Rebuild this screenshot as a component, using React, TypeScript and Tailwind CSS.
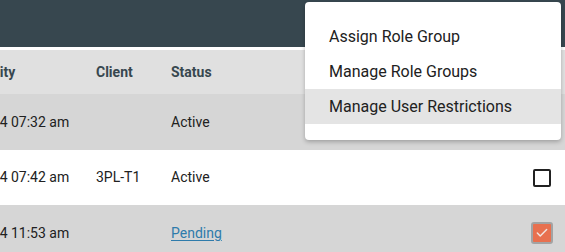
import { Check } from 'lucide-react';

interface UserRow {
  id: string;
  lastActivity: string;
  client: string;
  status: 'Active' | 'Pending';
  checked: boolean;
  bg: string;
  h: string;
}

const rows: UserRow[] = [
  { id: '1', lastActivity: '25/07/2024 07:32 am', client: '', status: 'Active', checked: false, bg: 'bg-[#d6d6d6]', h: 'h-[56px]' },
  { id: '2', lastActivity: '25/07/2024 07:42 am', client: '3PL-T1', status: 'Active', checked: false, bg: 'bg-white', h: 'h-[55px]' },
  { id: '3', lastActivity: '25/07/2024 11:53 am', client: '', status: 'Pending', checked: true, bg: 'bg-[#d6d6d6]', h: 'h-[56px]' },
];

const menuItems = ['Assign Role Group', 'Manage Role Groups', 'Manage User Restrictions'];

export default function App() {
  return (
    <div className="relative w-[565px] h-[252px] overflow-hidden bg-white font-['Roboto',sans-serif]">
      {/* Top bar */}
      <div className="h-[47px] bg-[#37474f]"></div>
      <div className="h-[3px] bg-white"></div>

      {/* Table */}
      <div className="ml-[-63px]">
        <div className="flex items-center h-[44px] bg-[#e0e0e0] text-[14px] font-bold text-[#37474f]">
          <div className="w-[159px] shrink-0 whitespace-nowrap">Last Activity</div>
          <div className="w-[75px] shrink-0">Client</div>
          <div className="flex-1">Status</div>
        </div>

        {rows.map((row) => (
          <div
            key={row.id}
            className={`flex items-center ${row.h} ${row.bg} text-[14px] text-[#212121]`}
          >
            <div className="w-[163px] ml-[-4px] shrink-0 whitespace-nowrap">{row.lastActivity}</div>
            <div className="w-[75px] shrink-0">{row.client}</div>
            <div className="flex-1">
              {row.status === 'Pending' ? (
                <span className="text-[#2e7bab] underline underline-offset-2">Pending</span>
              ) : (
                row.status
              )}
            </div>
            <div className="w-[22px] flex justify-center mr-[12px]">
              {row.checked ? (
                <div className="w-[22px] h-[22px] rounded-[3px] border-2 border-[#a3a3a3] bg-[#e8704f] flex items-center justify-center">
                  <Check className="w-[14px] h-[14px] text-[#f1e4e0]" strokeWidth={2.5} />
                </div>
              ) : (
                <div className="w-[18px] h-[18px] rounded-[2px] border-2 border-[#212121]"></div>
              )}
            </div>
          </div>
        ))}
      </div>

      {/* Dropdown menu */}
      <div className="absolute left-[305px] top-[2px] w-[256px] h-[138px] bg-white rounded-[4px] shadow-[0_2px_4px_rgba(0,0,0,0.25)] pt-[17px]">
        {menuItems.map((item, index) => (
          <div
            key={item}
            className={`h-[35px] flex items-center pl-[24px] text-[16px] text-[#212121] ${
              index === 2 ? 'bg-[#e4e4e4]' : ''
            }`}
          >
            {item}
          </div>
        ))}
      </div>
    </div>
  );
}
